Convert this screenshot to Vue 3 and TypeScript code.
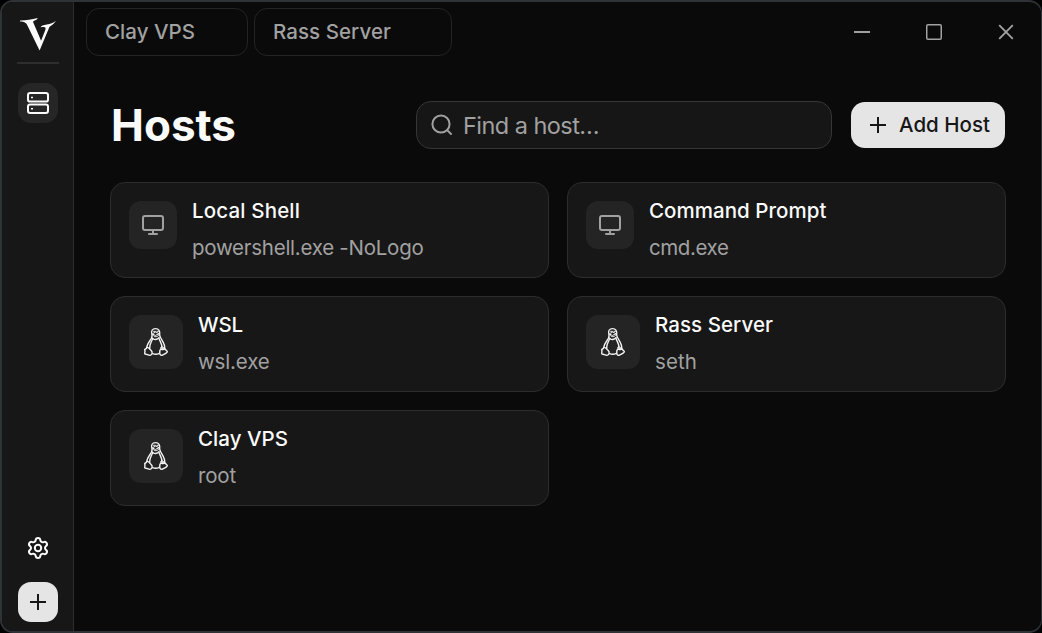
<script setup lang="ts">
import { ref } from 'vue'

interface Host {
  name: string
  detail: string
  kind: 'local' | 'linux'
  nameWidth: number
  detailWidth: number
}

const query = ref('')

const tabs = [
  { label: 'Clay VPS', width: 162, text: 90 },
  { label: 'Rass Server', width: 198, text: 118 },
]

const hosts: Host[] = [
  { name: 'Local Shell', detail: 'powershell.exe -NoLogo', kind: 'local', nameWidth: 108, detailWidth: 231.5 },
  { name: 'Command Prompt', detail: 'cmd.exe', kind: 'local', nameWidth: 177.5, detailWidth: 79.5 },
  { name: 'WSL', detail: 'wsl.exe', kind: 'linux', nameWidth: 45, detailWidth: 71.5 },
  { name: 'Rass Server', detail: 'seth', kind: 'linux', nameWidth: 118, detailWidth: 42 },
  { name: 'Clay VPS', detail: 'root', kind: 'linux', nameWidth: 90, detailWidth: 38 },
]

// Tightens or loosens tracking so a label fills its intended width.
function applyTracking(el: HTMLElement, width: number) {
  el.style.letterSpacing = '0px'
  const natural = el.getBoundingClientRect().width
  const count = (el.textContent ?? '').length
  if (count > 0) el.style.letterSpacing = `${(width - natural) / count}px`
}

const vTrack = {
  mounted(el: HTMLElement, binding: { value: number }) {
    applyTracking(el, binding.value)
    document.fonts.ready.then(() => applyTracking(el, binding.value))
  },
}
</script>

<template>
  <div class="window">
    <aside class="sidebar">
      <svg class="logo" width="38" height="36" viewBox="0 0 38 36" fill="#fafafa">
        <path d="M.9 3.500C6 3.600 12.500 3 18.600 1.100C18.400 2.400 17.100 3.300 14.700 3.900C14 4.300 14.100 5 14.500 6L22.100 23.800L26.200 13.200C27.300 10.400 26.500 9.400 21.500 10.300C22.300 8.900 24.300 8.100 27.800 7.600C31.300 7.100 34.300 5.700 37 3.700C35.600 6 33.800 7.700 31.600 9.100C30.500 9.900 30.100 10.700 29.600 11.900L20.600 33.600L8.300 8.200C7 5.500 5.200 4.700 1.100 4.500Z" />
      </svg>
      <div class="divider"></div>
      <button class="nav active" aria-label="Hosts">
        <svg width="24" height="24" viewBox="0 0 24 24" fill="none" stroke="#fafafa" stroke-width="2">
          <rect x="2" y="2" width="20" height="8.600" rx="2.200" />
          <rect x="2" y="13.400" width="20" height="8.600" rx="2.200" />
          <path d="M5 6.500h2M5 17.700h2" stroke-width="1.500" />
        </svg>
      </button>
      <div class="spacer"></div>
      <button class="nav settings" aria-label="Settings">
        <svg width="24" height="24" viewBox="0 0 24 24" fill="none" stroke="#fafafa" stroke-width="2" stroke-linecap="round" stroke-linejoin="round">
          <path d="M9.671 4.136a2.340 2.340 0 0 1 4.659 0 2.340 2.340 0 0 0 3.319 1.915 2.340 2.340 0 0 1 2.330 4.033 2.340 2.340 0 0 0 0 3.831 2.340 2.340 0 0 1-2.330 4.033 2.340 2.340 0 0 0-3.319 1.915 2.340 2.340 0 0 1-4.659 0 2.340 2.340 0 0 0-3.320-1.915 2.340 2.340 0 0 1-2.330-4.033 2.340 2.340 0 0 0 0-3.831A2.340 2.340 0 0 1 6.350 6.051a2.340 2.340 0 0 0 3.319-1.915" />
          <circle cx="12" cy="12" r="3.200" />
        </svg>
      </button>
      <button class="nav create" aria-label="New">
        <svg width="16" height="16" viewBox="0 0 16 16" stroke="#171717" stroke-width="2"><path d="M0 8h16M8 0v16" /></svg>
      </button>
    </aside>

    <main class="main">
      <header class="titlebar">
        <div v-for="tab in tabs" :key="tab.label" class="tab" :style="{ width: tab.width + 'px' }">
          <span v-track="tab.text" class="label">{{ tab.label }}</span>
        </div>
        <div class="controls">
          <button aria-label="Minimize">
            <svg width="16" height="16" viewBox="0 0 16 16" stroke="#a1a1a1" stroke-width="1.900"><path d="M0 8h16" /></svg>
          </button>
          <button aria-label="Maximize">
            <svg width="16" height="16" viewBox="0 0 16 16" stroke="#a1a1a1" stroke-width="1.500" fill="none"><rect x=".75" y=".75" width="14.500" height="14.500" rx="1.200" /></svg>
          </button>
          <button aria-label="Close">
            <svg width="16" height="16" viewBox="0 0 16 16" stroke="#a1a1a1" stroke-width="1.900"><path d="M1.200 1.200l13.600 13.600M14.800 1.200L1.200 14.800" /></svg>
          </button>
        </div>
      </header>

      <section class="content">
        <div class="toolbar">
          <h1><span v-track="125" class="label">Hosts</span></h1>
          <label class="search">
            <svg width="24" height="24" viewBox="0 0 24 24" fill="none" stroke="#a1a1a1" stroke-width="2" stroke-linecap="round">
              <circle cx="11" cy="11" r="8.600" /><path d="M17.400 17.400l3.600 3.600" />
            </svg>
            <input v-model="query" type="text" placeholder="Find a host…" />
          </label>
          <button class="add">
            <svg width="16" height="16" viewBox="0 0 16 16" stroke="#171717" stroke-width="2"><path d="M0 8h16M8 0v16" /></svg>
            <span v-track="91" class="label">Add Host</span>
          </button>
        </div>

        <div class="grid">
          <article v-for="host in hosts" :key="host.name" class="card">
            <div class="badge" :class="host.kind">
              <svg v-if="host.kind === 'local'" width="24" height="24" viewBox="0 0 24 24" fill="none" stroke="#a1a1a1" stroke-width="2" stroke-linecap="round" stroke-linejoin="round">
                <rect x="2" y="3" width="20" height="14" rx="2" />
                <path d="M12 17v4M8 21h8" />
              </svg>
              <svg v-else class="tux" width="24" height="28" viewBox="0 0 72 84" fill="none" stroke="#f5f5f5" stroke-width="4.200" stroke-linejoin="round" stroke-linecap="round">
                <path d="M24 22C20 8 25 2 35 2C44 2 49 9 47 21C48 34 65 44 62 63M24 22C26 34 9 43 8 59" />
                <path d="M26 31C24 41 15 48 17 62M45 31C47 41 55 46 54 61" />
                <path d="M26 31C30 36 40 36 45 29" />
                <path d="M26 17L35 12L45 17L35 22ZM26 20C29 28 41 29 46 19M29 10h5M39 10h4" stroke-width="3" />
                <path d="M8 59C12 56 17 62 21 67C27 73 25 80 18 82C12 81 7 78 3 78C0 75 5 71 2 65C3 62 7 64 8 59Z" />
                <path d="M48 66C51 61 59 68 62 62C65 63 65 68 70 70C72 74 60 79 54 82C47 83 46 76 48 66Z" />
                <path d="M26 77C33 80 40 79 46 76" />
                <circle cx="54" cy="60" r="4" stroke-width="3" />
              </svg>
            </div>
            <div class="info">
              <div class="name"><span v-track="host.nameWidth" class="label">{{ host.name }}</span></div>
              <div class="detail"><span v-track="host.detailWidth" class="label">{{ host.detail }}</span></div>
            </div>
          </article>
        </div>
      </section>
    </main>
  </div>
</template>

<style>
html,
body {
  background: #000;
}
</style>

<style scoped>
* {
  box-sizing: border-box;
}
.window {
  display: flex;
  width: 1042px;
  height: 633px;
  overflow: hidden;
  border: 2px solid #303336;
  border-right-width: 1px;
  border-radius: 13px;
  background: #0a0a0a;
  color: #fafafa;
  font-family: Inter, "Liberation Sans", sans-serif;
}
button {
  padding: 0;
  border: 0;
  background: none;
  font: inherit;
}
svg {
  display: block;
  flex: none;
}
.tux {
  overflow: visible;
}
.label {
  display: inline-block;
  white-space: nowrap;
}
.sidebar {
  display: flex;
  flex: none;
  flex-direction: column;
  align-items: center;
  width: 72px;
  padding: 15px 0 9px;
  border-right: 1px solid #2d2d2d;
  background: #171717;
}
.divider {
  width: 42px;
  height: 2px;
  margin: 9px 0 19px;
  background: #2e2e2e;
}
.nav {
  display: flex;
  align-items: center;
  justify-content: center;
  width: 40px;
  height: 40px;
  border-radius: 13px;
}
.active {
  background: #262626;
}
.spacer {
  flex: 1;
}
.settings {
  margin-bottom: 14px;
}
.create {
  background: #e5e5e5;
}
.main {
  display: flex;
  flex: 1;
  flex-direction: column;
  min-width: 0;
}
.titlebar {
  display: flex;
  gap: 6px;
  height: 60px;
  padding: 6px 0 6px 12px;
}
.tab {
  display: flex;
  align-items: center;
  height: 48px;
  padding: 0 0 2px 18px;
  border: 1px solid #242424;
  border-radius: 13px;
  color: #a1a1a1;
  font-size: 20.5px;
  font-weight: 450;
}
.controls {
  display: flex;
  margin: 0 -1px 0 auto;
}
.controls button {
  display: flex;
  align-items: center;
  justify-content: center;
  width: 72px;
  height: 48px;
}
.content {
  padding: 39px 35px 0 36px;
}
.toolbar {
  display: flex;
  align-items: center;
  height: 48px;
}
h1 {
  width: 305px;
  margin: 0 0 0 1px;
  font-size: 44px;
  font-weight: 700;
  line-height: 48px;
}
.search {
  display: flex;
  align-items: center;
  gap: 9px;
  width: 416px;
  height: 48px;
  padding-left: 13px;
  border: 1px solid #363636;
  border-radius: 15px;
  background: #161616;
}
input {
  flex: 1;
  min-width: 0;
  padding: 0;
  border: 0;
  outline: 0;
  background: none;
  color: #fafafa;
  font: 23.5px Inter, "Liberation Sans", sans-serif;
  letter-spacing: -0.55px;
}
input::placeholder {
  color: #a1a1a1;
  opacity: 1;
}
.add {
  display: flex;
  align-items: center;
  gap: 13px;
  width: 154px;
  height: 46px;
  margin-left: 19px;
  padding-left: 19px;
  border-radius: 14px;
  background: #e5e5e5;
  color: #171717;
  font-size: 20.5px;
  font-weight: 500;
}
.add .label {
  padding-bottom: 2px;
}
.grid {
  display: grid;
  grid-template-columns: 439px 439px;
  gap: 18px;
  margin-top: 33px;
}
.card {
  display: flex;
  align-items: flex-start;
  gap: 15px;
  height: 96px;
  padding: 18px;
  border: 1px solid #2d2d2d;
  border-radius: 15px;
  background: #171717;
}
.badge {
  display: flex;
  flex: none;
  align-items: center;
  justify-content: center;
  width: 48px;
  height: 48px;
  border-radius: 12px;
  background: #242424;
}
.badge.linux {
  width: 54px;
  height: 54px;
}
.info {
  margin-top: -6px;
  font-size: 20.5px;
}
.name {
  height: 32px;
  font-weight: 550;
  line-height: 32px;
}
.detail {
  height: 32px;
  margin-top: 5px;
  color: #a1a1a1;
  line-height: 32px;
}
</style>
